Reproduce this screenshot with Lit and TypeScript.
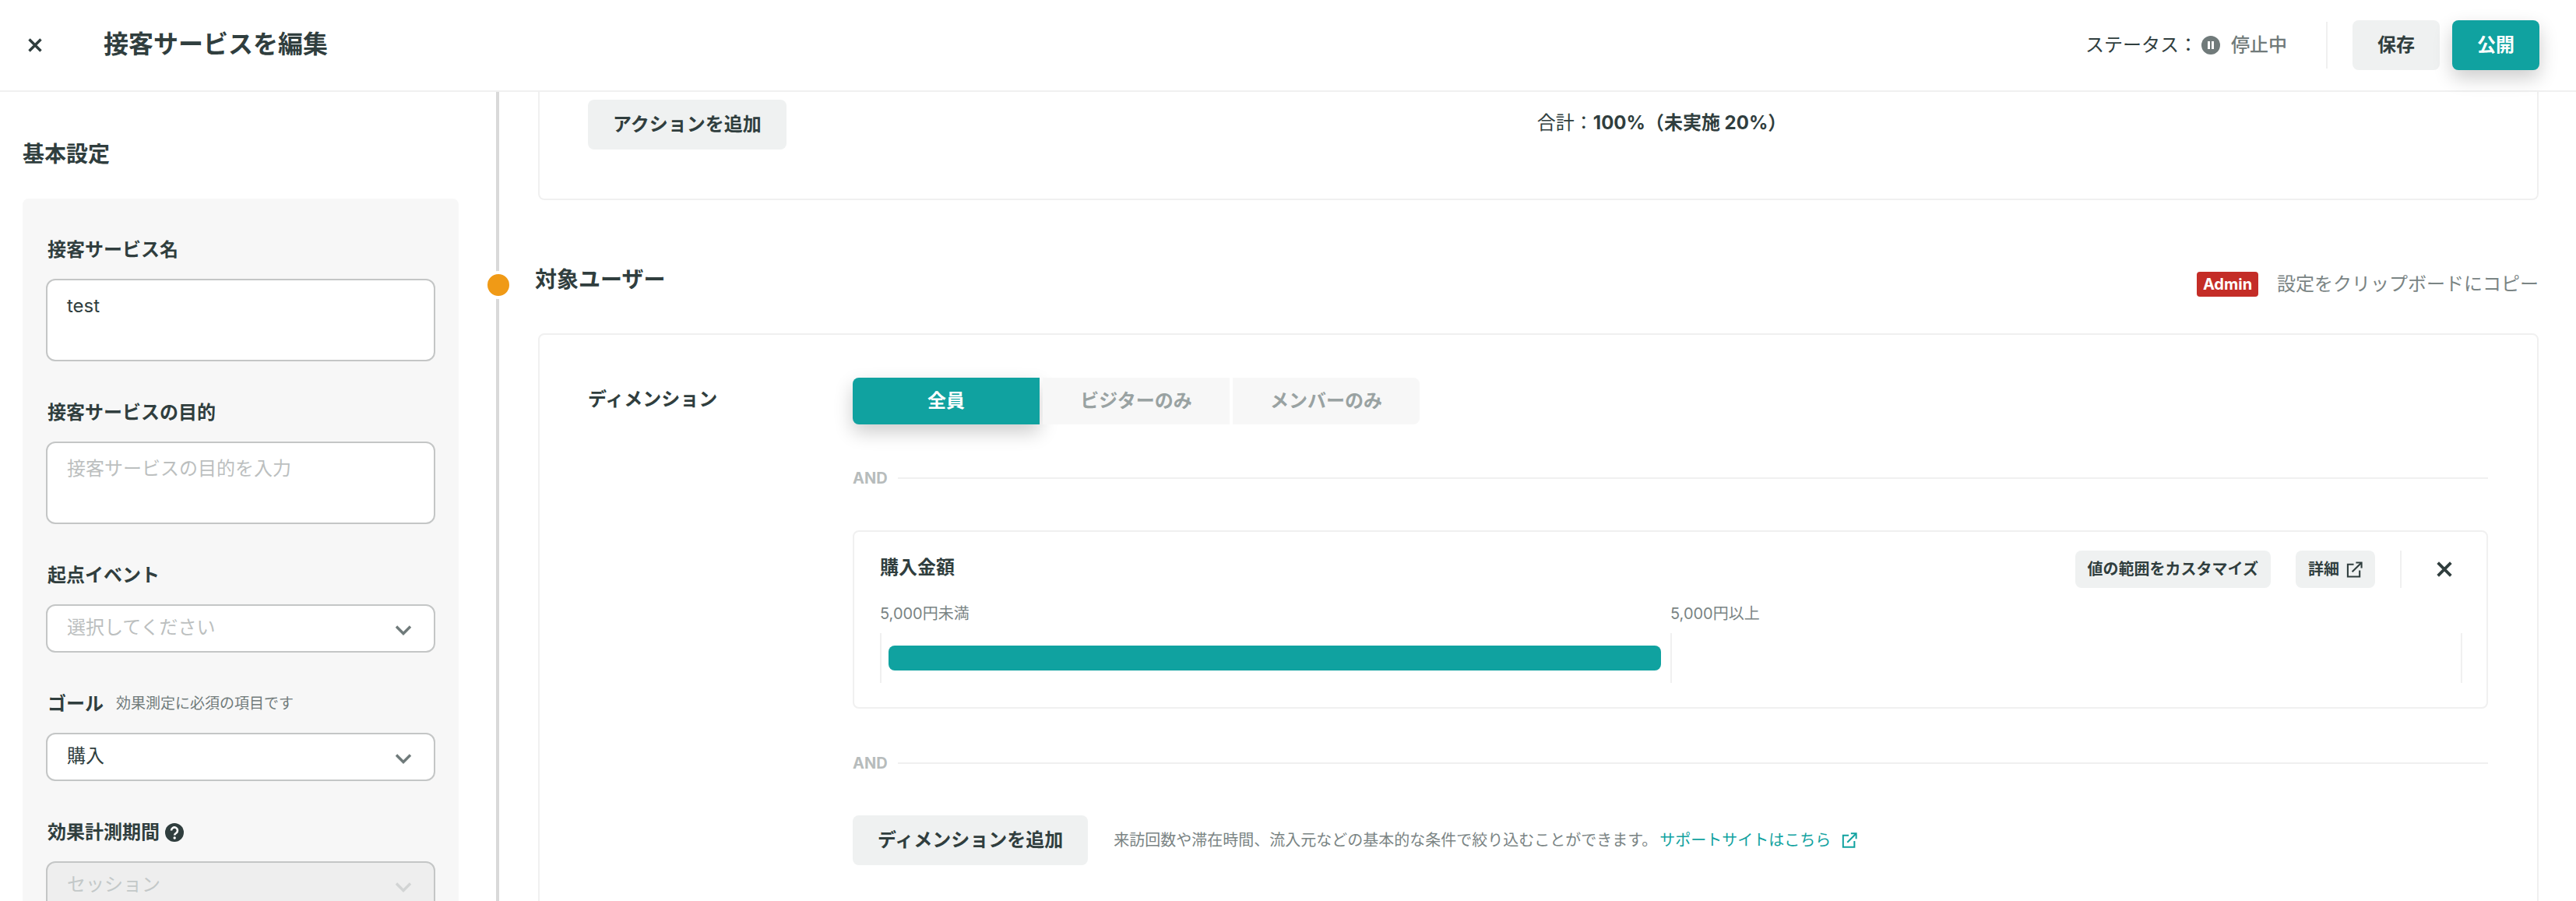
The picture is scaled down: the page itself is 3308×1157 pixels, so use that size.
import { LitElement, css, html, svg } from "lit";
import { customElement } from "lit/decorators.js";

const closeIcon = (size: number) => html`
  <svg class="close-icon" width=${size} height=${size} viewBox="0 0 18 18" fill="none" stroke="currentColor" stroke-width="3.4">
    ${svg`<path d="M1.5 1.5 16.5 16.5M16.5 1.5 1.5 16.5" />`}
  </svg>`;

const chevron = html`
  <svg class="chevron" width="22" height="14" viewBox="0 0 22 14" fill="none" stroke="currentColor" stroke-width="3.4">
    ${svg`<path d="M2 2.5 11 11.5 20 2.5" />`}
  </svg>`;

const externalIcon = (size: number) => html`
  <svg class="ext" width=${size} height=${size} viewBox="0 0 22 22" fill="none" stroke="currentColor" stroke-width="2.2">
    ${svg`<path d="M10 4H2V20.5H18V12" /><path d="M8 14 20 2" /><path d="M13 1.5H20.5V9" />`}
  </svg>`;

@customElement("app-root")
export class AppRoot extends LitElement {
  static styles = css`
    :host {
      display: flex;
      flex-direction: column;
      height: 1157px;
      overflow: hidden;
      background: #fff;
      color: #303e3e;
      font-family: Inter, "Noto Sans CJK JP", sans-serif;
      font-size: 24px;
      line-height: 36px;
    }

    .topbar {
      flex: none;
      display: flex;
      align-items: center;
      height: 116px;
      padding: 0 47px 0 36px;
      background: #fff;
      border-bottom: 2px solid #f0f0f0;
      position: relative;
      z-index: 2;
    }
    .topbar-close { display: flex; width: 98px; }
    .topbar h1 { margin: 0 0 2px -1px; font-size: 32px; font-weight: 700; line-height: 44px; }
    .status { display: flex; align-items: center; margin-left: auto; }
    .pause { margin: 0 14px 0 5px; }
    .status-value { color: #707a7a; font-weight: 500; }
    .vline { width: 2px; height: 60px; background: #f0f0f0; margin: 0 32px 0 50px; }

    button {
      font: inherit;
      font-weight: 700;
      color: inherit;
      border: 0;
      border-radius: 8px;
      background: #eff1f1;
      padding: 0;
    }
    .btn-lg { height: 64px; padding: 0 32px; }
    .btn-top { width: 112px; height: 64px; }
    .btn-primary {
      background: #10a2a0;
      color: #fff;
      margin-left: 16px;
      box-shadow: 0 10px 24px rgba(0, 0, 0, 0.2);
    }
    .btn-sm {
      display: flex;
      align-items: center;
      height: 48px;
      padding: 0 16px;
      font-size: 20px;
      line-height: 28px;
    }
    .ext { display: block; }
    .btn-sm .ext { margin-left: 9px; }

    .body { flex: 1; min-height: 0; display: flex; }

    .side {
      flex: none;
      box-sizing: border-box;
      width: 641px;
      padding: 60px 48px 0 29px;
      border-right: 4px solid #d9d9d9;
      overflow: hidden;
    }
    .side h2 { margin: 0 0 37px; font-size: 28px; font-weight: 700; line-height: 40px; }
    .side-card {
      padding: 48px 30px 60px;
      background: #f7f7f7;
      border-radius: 8px;
    }
    .field { margin-bottom: 48px; }
    .field-label {
      display: flex;
      align-items: center;
      margin: 0 0 19px 2px;
      font-weight: 700;
    }
    .field-hint { margin-left: 16px; font-size: 19px; font-weight: 400; color: #707a7a; }
    .help { margin-left: 7px; }
    textarea, .select {
      box-sizing: border-box;
      width: 100%;
      border: 2px solid #c4c6c6;
      border-radius: 12px;
      background: #fff;
      color: inherit;
      font: inherit;
    }
    textarea {
      display: block;
      height: 106px;
      padding: 15px 25px;
      resize: none;
      outline: none;
    }
    textarea::placeholder { color: #bcbfbf; opacity: 1; }
    .select {
      display: flex;
      align-items: center;
      justify-content: space-between;
      height: 62px;
      padding: 0 28px 0 25px;
    }
    .select .chevron { color: #6f7a7a; margin-top: 4px; }
    .select span { margin-bottom: 2px; }
    .placeholder { color: #bcbfbf; }
    .select.disabled { background: #eeeeee; }
    .select.disabled .placeholder { color: #c3c8c8; }
    .select.disabled .chevron { color: #d2d4d4; }

    .main { flex: 1; min-width: 0; padding: 0 48px 0 50px; }
    .card {
      border: 2px solid #f0f0f0;
      border-radius: 8px;
      background: #fff;
    }
    .card-actions {
      display: flex;
      align-items: center;
      gap: 964px;
      border-top: 0;
      border-radius: 0 0 8px 8px;
      padding: 10px 62px 63px;
    }
    .card-actions .total { margin-bottom: 4px; }
    .card-actions b { font-weight: 700; }

    .section-head {
      position: relative;
      display: flex;
      align-items: center;
      height: 40px;
      margin: 88px 0 43px;
    }
    .dot {
      position: absolute;
      left: -69px;
      top: 3px;
      width: 28px;
      height: 28px;
      border: 4px solid #fff;
      border-radius: 50%;
      background: #f09a16;
    }
    .section-head h2 {
      margin: 0 0 12px -4px;
      font-size: 28px;
      font-weight: 700;
      line-height: 40px;
    }
    .admin {
      margin-left: auto;
      width: 79px;
      height: 32px;
      border-radius: 4px;
      background: #c42d27;
      color: #fff;
      font-size: 20px;
      font-weight: 700;
      line-height: 32px;
      text-align: center;
    }
    .copy { margin-left: 24px; color: #7a8484; }

    .card-target {
      display: grid;
      grid-template-columns: 340px 1fr;
      padding: 55px 63px 200px 62px;
    }
    .row-label { padding-top: 10px; font-weight: 700; }

    .tabs { display: flex; gap: 4px; }
    .tab {
      width: 240px;
      height: 60px;
      border-radius: 0;
      background: #f7f7f7;
      color: #99a2a2;
    }
    .tab:first-child { border-radius: 8px 0 0 8px; }
    .tab:last-child { border-radius: 0 8px 8px 0; }
    .tab.active {
      background: #10a2a0;
      color: #fff;
      box-shadow: 0 10px 24px rgba(0, 0, 0, 0.2);
    }

    .and {
      display: flex;
      align-items: center;
      gap: 13px;
      height: 24px;
      margin: 57px 0 55px;
      color: #b7bcbc;
      font-size: 20px;
      font-weight: 700;
      line-height: 24px;
    }
    .and.next { margin-top: 58px; }
    .and::after { content: ""; flex: 1; height: 2px; background: #f0f0f0; }

    .metric { padding-bottom: 31px; }
    .metric-head {
      display: flex;
      align-items: center;
      gap: 32px;
      padding: 24px 0 0 33px;
    }
    .metric-head h3 {
      margin: 0 auto 4px 0;
      font-size: 24px;
      font-weight: 700;
      line-height: 36px;
    }
    .metric-remove {
      display: flex;
      align-items: center;
      height: 48px;
      width: 111px;
      justify-content: center;
      border-left: 2px solid #f0f0f0;
      box-sizing: border-box;
    }
    .range {
      display: grid;
      grid-template-columns: 1fr 1fr 2px;
      grid-template-rows: 28px 64px;
      row-gap: 11px;
      padding: 19px 31px 0 33px;
      color: #7a8484;
      font-size: 20px;
      line-height: 28px;
    }
    .range-label { grid-row: 1; }
    .range-cell {
      grid-row: 2;
      box-sizing: border-box;
      padding: 16px 12px 16px 9px;
      border-left: 2px solid #f0f0f0;
    }
    .range-end { grid-row: 2; background: #f0f0f0; }
    .range-bar { height: 32px; border-radius: 8px; background: #10a2a0; }

    .add-row { display: flex; align-items: center; }
    .add-note {
      display: flex;
      align-items: center;
      margin-left: 33px;
      color: #7a8484;
      font-size: 20px;
      line-height: 28px;
    }
    .add-note a { margin-left: 3px; color: #10a2a0; text-decoration: none; }
    .add-note .ext { margin-left: 14px; color: #10a2a0; }
  `;

  render() {
    return html`
      <header class="topbar">
        <span class="topbar-close">${closeIcon(18)}</span>
        <h1>接客サービスを編集</h1>
        <div class="status">
          <span>ステータス：</span>
          <svg class="pause" width="24" height="24" viewBox="0 0 24 24">
            <circle cx="12" cy="12" r="12" fill="#707a7a" />
            <path d="M8 7h3v10H8zM13 7h3v10h-3z" fill="#fff" />
          </svg>
          <span class="status-value">停止中</span>
        </div>
        <span class="vline"></span>
        <button class="btn-top">保存</button>
        <button class="btn-top btn-primary">公開</button>
      </header>

      <div class="body">
        <aside class="side">
          <h2>基本設定</h2>
          <div class="side-card">
            <div class="field">
              <div class="field-label">接客サービス名</div>
              <textarea .value=${"test"}></textarea>
            </div>
            <div class="field">
              <div class="field-label">接客サービスの目的</div>
              <textarea placeholder="接客サービスの目的を入力"></textarea>
            </div>
            <div class="field">
              <div class="field-label">起点イベント</div>
              <div class="select"><span class="placeholder">選択してください</span>${chevron}</div>
            </div>
            <div class="field">
              <div class="field-label">ゴール<span class="field-hint">効果測定に必須の項目です</span></div>
              <div class="select"><span>購入</span>${chevron}</div>
            </div>
            <div class="field">
              <div class="field-label">
                効果計測期間
                <svg class="help" width="24" height="24" viewBox="0 0 24 24">
                  <circle cx="12" cy="12" r="12" fill="#303e3e" />
                  <path d="M8 9.5a4 4 0 1 1 6.3 3.2c-1.3.9-2.1 1.4-2.1 2.8" fill="none" stroke="#fff" stroke-width="2.6" />
                  <circle cx="12.2" cy="19" r="1.7" fill="#fff" />
                </svg>
              </div>
              <div class="select disabled"><span class="placeholder">セッション</span>${chevron}</div>
            </div>
          </div>
        </aside>

        <main class="main">
          <div class="card card-actions">
            <button class="btn-lg">アクションを追加</button>
            <span class="total">合計：<b>100%（未実施 20%）</b></span>
          </div>

          <div class="section-head">
            <span class="dot"></span>
            <h2>対象ユーザー</h2>
            <span class="admin">Admin</span>
            <span class="copy">設定をクリップボードにコピー</span>
          </div>

          <div class="card card-target">
            <div class="row-label">ディメンション</div>
            <div>
              <div class="tabs">
                <button class="tab active">全員</button>
                <button class="tab">ビジターのみ</button>
                <button class="tab">メンバーのみ</button>
              </div>

              <div class="and">AND</div>

              <div class="card metric">
                <div class="metric-head">
                  <h3>購入金額</h3>
                  <button class="btn-sm">値の範囲をカスタマイズ</button>
                  <button class="btn-sm">詳細${externalIcon(21)}</button>
                  <span class="metric-remove">${closeIcon(20)}</span>
                </div>
                <div class="range">
                  <span class="range-label">5,000円未満</span>
                  <span class="range-label">5,000円以上</span>
                  <div class="range-cell"><div class="range-bar"></div></div>
                  <div class="range-cell"></div>
                  <div class="range-end"></div>
                </div>
              </div>

              <div class="and next">AND</div>

              <div class="add-row">
                <button class="btn-lg">ディメンションを追加</button>
                <div class="add-note">
                  来訪回数や滞在時間、流入元などの基本的な条件で絞り込むことができます。
                  <a href="#">サポートサイトはこちら</a>
                  ${externalIcon(20)}
                </div>
              </div>
            </div>
          </div>
        </main>
      </div>
    `;
  }
}
